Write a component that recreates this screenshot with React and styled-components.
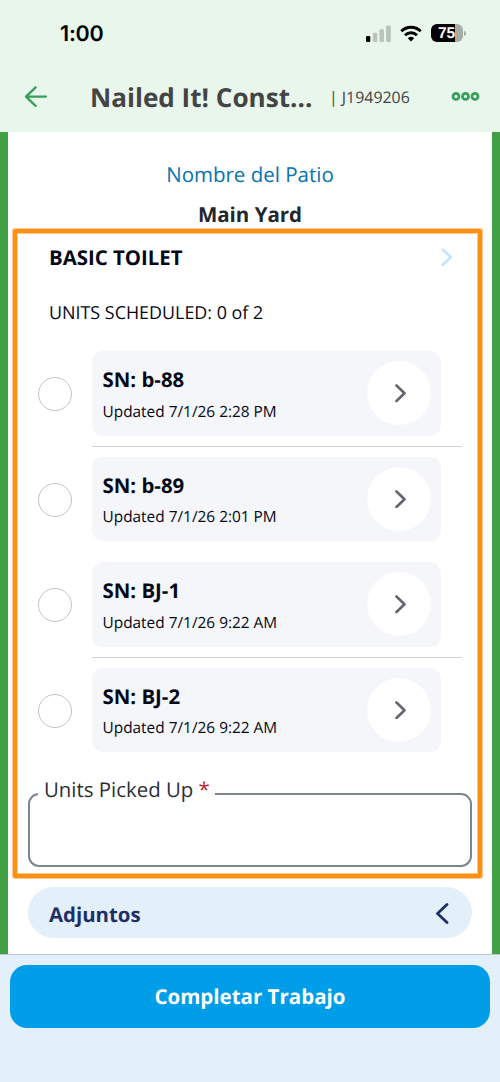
import React from 'react';
import styled, {createGlobalStyle} from 'styled-components';

const units = [
    {id: 1, sn: 'b-88', updated: '7/1/26 2:28 PM', divider: true},
    {id: 2, sn: 'b-89', updated: '7/1/26 2:01 PM', divider: false},
    {id: 3, sn: 'BJ-1', updated: '7/1/26 9:22 AM', divider: true},
    {id: 4, sn: 'BJ-2', updated: '7/1/26 9:22 AM', divider: false},
]

const Chevron = ({width, height, color, stroke = 2.2, left}) => (
    <svg width={width} height={height} viewBox={`0 0 ${width} ${height}`} fill="none">
        <path
            d={left
                ? `M${width - 1.5} 1.5L1.5 ${height / 2}L${width - 1.5} ${height - 1.5}`
                : `M1.5 1.5L${width - 1.5} ${height / 2}L1.5 ${height - 1.5}`}
            stroke={color}
            strokeWidth={stroke}
            strokeLinecap="round"
            strokeLinejoin="round"
        />
    </svg>
)

const SignalIcon = () => (
    <svg width="25" height="17" viewBox="0 0 25 17">
        <rect x="0" y="11" width="4.3" height="6" rx="1.2" fill="#000"/>
        <rect x="6.9" y="7.7" width="4.4" height="9.3" rx="1.2" fill="#b9c5bc"/>
        <rect x="13.4" y="4.3" width="4.6" height="12.7" rx="1.2" fill="#b9c5bc"/>
        <rect x="20.1" y="0.5" width="4.7" height="16.5" rx="1.2" fill="#b9c5bc"/>
    </svg>
)

const WifiIcon = () => (
    <svg width="22" height="17" viewBox="0 0 22 17" fill="none" stroke="#000" strokeWidth="2.9">
        <path d="M1.3 6.3A13.8 13.8 0 0 1 20.7 6.3"/>
        <path d="M5 10.2A8.6 8.6 0 0 1 17 10.2"/>
        <path d="M11 16.5L7.8 13.3A4.7 4.7 0 0 1 14.2 13.3Z" fill="#000" stroke="none"/>
    </svg>
)

const BackIcon = () => (
    <svg width="24" height="22" viewBox="0 0 24 22" fill="none" stroke="#37a05c" strokeWidth="2.3" strokeLinecap="round" strokeLinejoin="round">
        <path d="M11.6 1.3L2 10.6L11.6 19.9M2 10.6H22"/>
    </svg>
)

const MoreIcon = () => (
    <svg width="29" height="10" viewBox="0 0 29 10" fill="none" stroke="#37a05c" strokeWidth="2.8">
        <circle cx="5" cy="4.4" r="3"/>
        <circle cx="14.5" cy="4.4" r="3"/>
        <circle cx="24" cy="4.4" r="3"/>
    </svg>
)

const UnitRow = ({unit}) => (
    <Row>
        <Radio/>
        <RowBody $divider={unit.divider}>
            <UnitCard>
                <div>
                    <UnitName>SN: {unit.sn}</UnitName>
                    <UnitDate>Updated {unit.updated}</UnitDate>
                </div>
                <RoundButton>
                    <Chevron width={11} height={18.5} color="#65656d" stroke={2.6}/>
                </RoundButton>
            </UnitCard>
        </RowBody>
    </Row>
)

const App = () => {
    return (
        <Screen>
            <GlobalStyle/>
            <Header>
                <StatusBar>
                    <Clock>1:00</Clock>
                    <StatusIcons>
                        <SignalIcon/>
                        <WifiIcon/>
                        <Battery>
                            <BatteryBody>75</BatteryBody>
                            <BatteryTip/>
                        </Battery>
                    </StatusIcons>
                </StatusBar>
                <NavBar>
                    <BackIcon/>
                    <Title>Nailed It! Const...</Title>
                    <JobNumber>| J1949206</JobNumber>
                    <MoreIcon/>
                </NavBar>
            </Header>
            <Content>
                <YardLabel>Nombre del Patio</YardLabel>
                <YardName>Main Yard</YardName>
                <Section>
                    <Highlight/>
                    <SectionHead>
                        <SectionTitle>BASIC TOILET</SectionTitle>
                        <Chevron width={11.5} height={18.5} color="#bfe5fa" stroke={2.5}/>
                    </SectionHead>
                    <Scheduled>UNITS SCHEDULED: 0 of 2</Scheduled>
                    {units.map((unit) => <UnitRow key={unit.id} unit={unit}/>)}
                    <Field>
                        <FieldLabel>Units Picked Up <Required>*</Required></FieldLabel>
                    </Field>
                </Section>
                <Attachments>
                    <AttachmentsTitle>Adjuntos</AttachmentsTitle>
                    <Chevron width={12.5} height={21} color="#1f2f66" stroke={2.8} left/>
                </Attachments>
            </Content>
            <Footer>
                <CompleteButton>Completar Trabajo</CompleteButton>
            </Footer>
        </Screen>
    );
};

export default App;


const GlobalStyle = createGlobalStyle`
  * {
    box-sizing: border-box;
  }

  body {
    margin: 0;
    font-family: 'Open Sans', 'Noto Sans', sans-serif;
    color: #050816;
    text-rendering: geometricPrecision;
  }

  svg {
    display: block;
    flex-shrink: 0;
  }
`

const Screen = styled.div`
  width: 500px;
  height: 1082px;
  display: flex;
  flex-direction: column;
  overflow: hidden;
  background-color: #fff;
`

const Header = styled.div`
  height: 132px;
  flex-shrink: 0;
  background-color: #e9f6ec;
`

const StatusBar = styled.div`
  height: 66px;
  display: flex;
  align-items: center;
  justify-content: space-between;
  padding: 0 34px 0 60px;
`

const Clock = styled.div`
  padding-top: 2px;
  font-family: 'Inter', sans-serif;
  font-size: 21.5px;
  font-weight: 600;
  line-height: 26px;
  letter-spacing: -0.2px;
  color: #000;
`

const StatusIcons = styled.div`
  display: flex;
  align-items: center;
  gap: 9px;
`

const Battery = styled.div`
  display: flex;
  align-items: center;
  gap: 1px;
`

const BatteryBody = styled.div`
  width: 32px;
  height: 18px;
  padding-right: 1px;
  border-radius: 6px;
  background: linear-gradient(to right, #000 24px, #a4aea6 24px);
  color: #fff;
  font-family: 'Liberation Sans', sans-serif;
  font-size: 15.5px;
  font-weight: 700;
  line-height: 19px;
  text-align: center;
`

const BatteryTip = styled.div`
  width: 2px;
  height: 5px;
  border-radius: 0 2px 2px 0;
  background-color: #a4aea6;
`

const NavBar = styled.div`
  height: 61px;
  display: flex;
  align-items: center;
  padding: 0 20px 0 24px;
`

const Title = styled.div`
  width: 281px;
  padding-left: 42px;
  font-size: 26.1px;
  font-weight: 700;
  color: #444;
  white-space: nowrap;
`

const JobNumber = styled.div`
  flex: 1;
  font-size: 15.9px;
  color: #444;
  white-space: nowrap;
`

const Content = styled.div`
  height: 822px;
  flex-shrink: 0;
  padding: 28px 20px 0;
  border-left: 8px solid #419f44;
  border-right: 8px solid #419f44;
`

const YardLabel = styled.div`
  font-size: 20.5px;
  line-height: 30px;
  text-align: center;
  color: #0873b1;
`

const YardName = styled.div`
  height: 39px;
  padding-top: 10px;
  font-size: 20.5px;
  font-weight: 700;
  line-height: 30px;
  text-align: center;
  color: #22262e;
`

const Section = styled.div`
  position: relative;
  height: 638px;
`

const Highlight = styled.div`
  position: absolute;
  top: 0;
  left: -15px;
  width: 469px;
  height: 649px;
  border: 4px solid #fb9014;
  border-radius: 2px;
  box-shadow: 0 0 0 1px #fcc98a, inset 0 0 0 1px #fcc98a;
`

const SectionHead = styled.div`
  height: 56px;
  display: flex;
  align-items: center;
  justify-content: space-between;
  padding: 0 20px 0 21px;
`

const SectionTitle = styled.div`
  padding-bottom: 1px;
  font-size: 20.4px;
  font-weight: 700;
`

const Scheduled = styled.div`
  height: 66px;
  padding: 13px 0 0 21px;
  font-size: 17.9px;
  line-height: 30px;
`

const Row = styled.div`
  height: 105.5px;
  display: flex;
  padding-left: 10px;
`

const Radio = styled.div`
  width: 34px;
  height: 34px;
  flex-shrink: 0;
  margin-top: 26px;
  border: 1.5px solid #c4c4c6;
  border-radius: 50%;
`

const RowBody = styled.div`
  width: 370px;
  height: 96px;
  margin-left: 20px;
  border-bottom: 1px solid ${props => props.$divider ? '#d0d0d3' : 'transparent'};
`

const UnitCard = styled.div`
  width: 349px;
  height: 84.5px;
  display: flex;
  align-items: center;
  justify-content: space-between;
  padding: 0 10px 0 10.5px;
  border-radius: 11px;
  background-color: #f4f6fa;
`

const UnitName = styled.div`
  margin-top: 4.8px;
  font-size: 20.4px;
  font-weight: 700;
  line-height: 30px;
`

const UnitDate = styled.div`
  margin-top: 2.6px;
  font-size: 15.4px;
  line-height: 30px;
`

const RoundButton = styled.div`
  width: 64px;
  height: 64px;
  display: flex;
  align-items: center;
  justify-content: center;
  padding-left: 2px;
  border-radius: 50%;
  background-color: #fff;
`

const Field = styled.div`
  position: relative;
  height: 74px;
  margin-top: 20px;
  border: 2px solid #7d8590;
  border-radius: 11px;
`

const FieldLabel = styled.div`
  position: absolute;
  top: -21px;
  left: 8px;
  padding: 0 5px 0 6px;
  font-size: 20.4px;
  line-height: 30px;
  color: #2b2e37;
  background-color: #fff;
`

const Required = styled.span`
  color: #b91c1c;
`

const Attachments = styled.div`
  height: 51px;
  display: flex;
  align-items: center;
  justify-content: space-between;
  margin-top: 20px;
  padding: 1px 23.5px 0 21px;
  border-radius: 26px;
  background-color: #e3f0f9;
`

const AttachmentsTitle = styled.div`
  padding-top: 1px;
  color: #1f2f66;
  font-size: 20.4px;
  font-weight: 700;
`

const Footer = styled.div`
  flex: 1;
  padding: 10px 10px 0;
  border-top: 1px solid #b9c6d0;
  background-color: #e3f0f9;
`

const CompleteButton = styled.div`
  height: 63px;
  padding-top: 1px;
  border-radius: 17px;
  background-color: #009de8;
  color: #fff;
  font-size: 20.5px;
  font-weight: 700;
  line-height: 63px;
  text-align: center;
`
